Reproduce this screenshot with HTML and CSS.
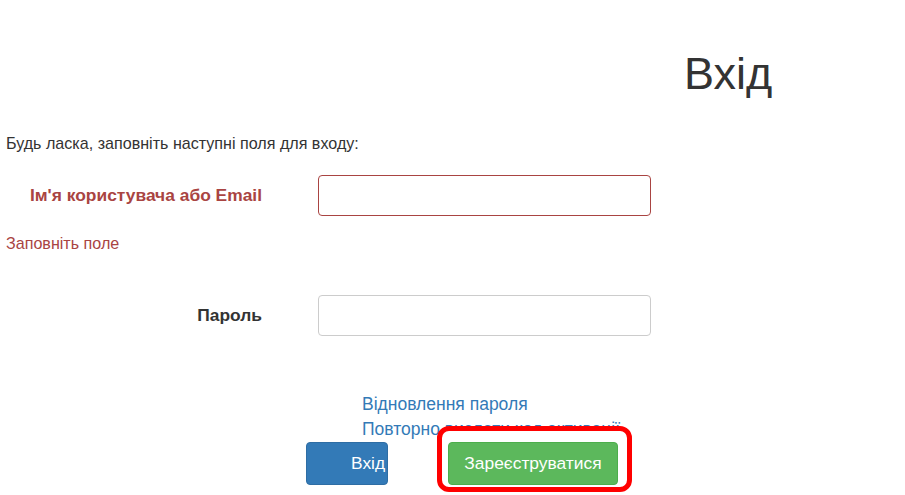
FILE: index.html
```html
<!DOCTYPE html>
<html>
<head>
    <meta charset="UTF-8">
    <title>Вхід</title>
    <link rel="stylesheet" href="styles.css">
</head>
<body>
    <h1 class="page-title">Вхід</h1>

    <p class="intro">Будь ласка, заповніть наступні поля для входу:</p>

    <form class="login-form">
        <div class="form-group has-error">
            <label for="username">Ім'я користувача або Email</label>
            <input type="text" id="username">
        </div>
        <div class="help-block">Заповніть поле</div>

        <div class="form-group">
            <label for="password">Пароль</label>
            <input type="password" id="password">
        </div>

        <div class="links">
            <a href="#">Відновлення пароля</a>
            <a href="#">Повторно вислати код активації</a>
        </div>

        <div class="actions">
            <button type="submit" class="btn btn-primary">Вхід</button>
            <div class="highlight">
                <button type="button" class="btn btn-success">Зареєструватися</button>
            </div>
        </div>
    </form>
</body>
</html>
```

FILE: styles.css
```css
body {
    font-family: "Liberation Sans", Arial, sans-serif;
    font-size: 16.1px;
    color: #333;
    margin: 0;
    padding: 0 6px;
    background: #fff;
}
.page-title {
    font-size: 45px;
    font-weight: normal;
    margin: 0;
    padding: 48px 0 0 678px;
    line-height: 52px;
}
.intro {
    margin: 33px 0 0;
    line-height: 20px;
}
.form-group {
    display: grid;
    grid-template-columns: 256px 333px;
    column-gap: 56px;
    align-items: center;
}
.has-error {
    margin-top: 22px;
}
.form-group label {
    text-align: right;
    font-weight: bold;
    font-size: 17.4px;
}
.form-group input {
    height: 41px;
    box-sizing: border-box;
    border: 1px solid #ccc;
    border-radius: 4px;
    padding: 6px 12px;
    font-size: 16px;
}
.has-error label {
    color: #a94442;
}
.has-error input {
    border-color: #a94442;
}
.help-block {
    color: #a94442;
    margin-top: 17px;
    line-height: 20px;
    margin-bottom: 42px;
}
.links {
    margin: 56px 0 0 356px;
    display: flex;
    flex-direction: column;
    font-size: 17.5px;
    line-height: 25px;
}
.links a {
    color: #337ab7;
    text-decoration: none;
}
.actions {
    display: flex;
    align-items: flex-start;
    margin-left: 300px;
}
.btn {
    font-family: inherit;
    font-size: 17.4px;
    color: #fff;
    border: 1px solid transparent;
    border-radius: 4px;
    height: 43px;
    padding: 0;
    cursor: pointer;
}
.btn-primary {
    background-color: #337ab7;
    border-color: #2e6da4;
    width: 82px;
    text-align: left;
    padding-left: 44px;
}
.btn-success {
    display: block;
    background-color: #5cb85c;
    border-color: #4cae4c;
    width: 170px;
}
.highlight {
    position: relative;
    margin: -16px 0 0 49px;
    padding: 11px 9px 2px 6px;
    border: 5px solid #f00;
    border-radius: 12px;
    background: #fff;
}
```
